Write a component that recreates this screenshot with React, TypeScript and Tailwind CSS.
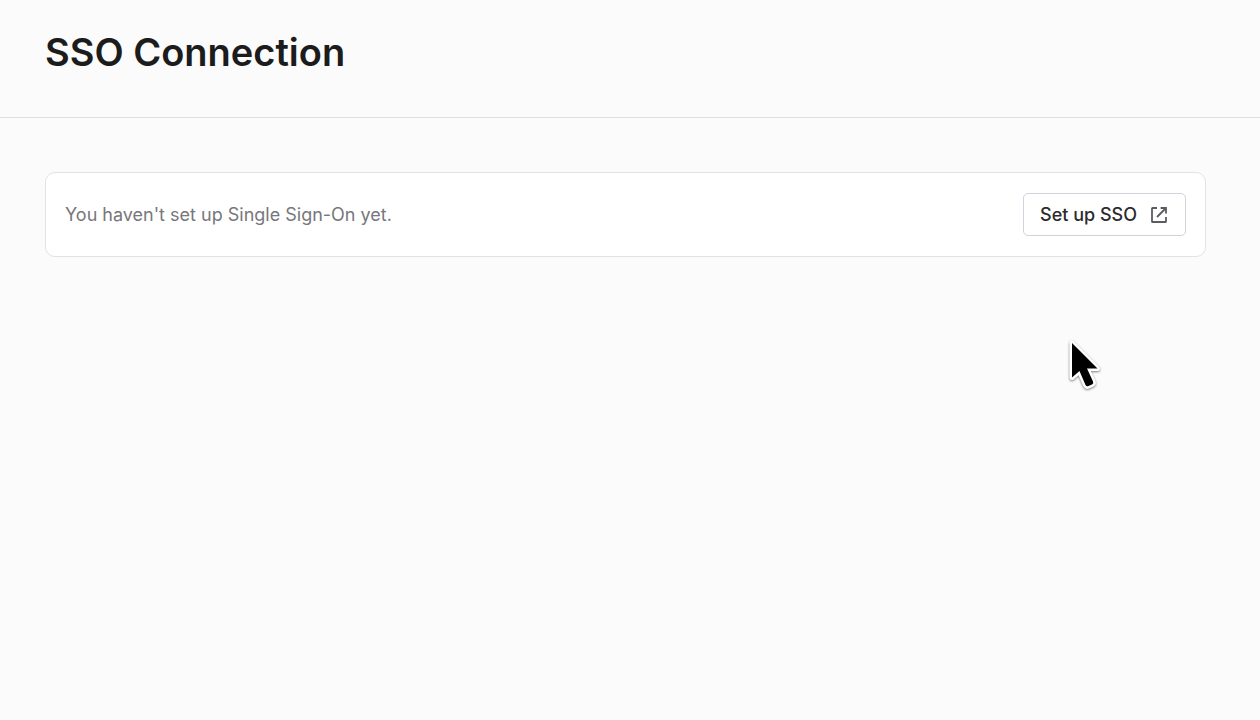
import { useState } from "react";

function ExternalIcon() {
  return (
    <svg
      className="w-4 h-4 text-[#5c5c60]"
      viewBox="0 0 16 16"
      fill="none"
      stroke="currentColor"
      strokeWidth="1.8"
      aria-hidden="true"
    >
      <path d="M6 1H1.6Q1 1 1 1.6V14.4Q1 15 1.6 15H14.4Q15 15 15 14.4V10" />
      <path d="M9.6 1H15V6.4M15 1L6 10" />
    </svg>
  );
}

function Pointer() {
  return (
    <svg
      className="absolute left-[1064px] top-[334px] w-10 h-[60px] pointer-events-none drop-shadow-[0_1px_1px_rgba(0,0,0,0.5)]"
      viewBox="0 0 40 60"
      aria-hidden="true"
    >
      <path
        d="M8 9V43.5L15.5 37L21.5 51Q22.5 53 24.5 52L28 50.5Q30 49.5 29 47.5L23 34.5H33.5Z"
        fill="#000"
        stroke="#fff"
        strokeWidth="5"
        strokeLinejoin="round"
        paintOrder="stroke"
      />
    </svg>
  );
}

export default function App() {
  const [opened, setOpened] = useState(false);

  return (
    <div className="relative w-full min-h-screen bg-[#fbfbfb] font-['Inter',sans-serif]">
      <header className="border-b border-[#e0e0e1] px-[45px] pt-8 pb-[45px]">
        <h1 className="text-[38px] leading-10 font-semibold text-[#1c1c1d]">
          SSO Connection
        </h1>
      </header>

      <main className="pl-[45px] pr-[54px] pt-[54px]">
        <section className="flex items-center justify-between bg-white border border-[#e2e2e4] rounded-[10px] px-[19px] py-5">
          <p className="text-lg text-[#77777b]">
            You haven't set up Single Sign-On yet.
          </p>
          <button
            type="button"
            aria-pressed={opened}
            onClick={() => setOpened(true)}
            className="flex items-center gap-[14px] h-[43px] pl-4 pr-[18px] bg-white border border-[#d2d2dc] rounded-[5px] text-lg font-medium text-[#2b2b2e]"
          >
            Set up SSO
            <ExternalIcon />
          </button>
        </section>
      </main>

      <Pointer />
    </div>
  );
}
